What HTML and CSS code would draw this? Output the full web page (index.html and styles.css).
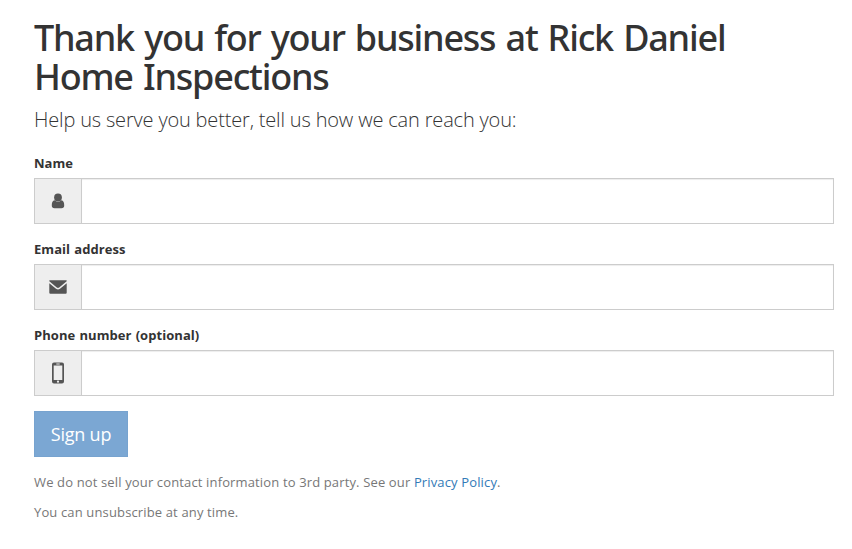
FILE: index.html
```html
<!DOCTYPE html>
<html lang="en">
<head>
    <meta charset="UTF-8">
    <meta name="viewport" content="width=device-width, initial-scale=1.0">
    <title>Rick Daniel Home Inspections</title>
    <link rel="stylesheet" href="styles.css">
</head>
<body>
    <div class="container">
        <h1>Thank you for your business at Rick Daniel Home Inspections</h1>
        <p class="lead">Help us serve you better, tell us how we can reach you:</p>

        <form>
            <div class="form-group">
                <label for="name">Name</label>
                <div class="input-group">
                    <span class="addon">
                        <svg width="14" height="16" viewBox="0 0 14 16"><circle cx="7" cy="4.500" r="3.900"/><path d="M3.800 7.200Q7 10.500 10.200 7.200C12.700 7.500 13.200 9.800 13.200 12.500Q13.200 15.300 10.500 15.300H3.500Q.8 15.300 .8 12.500C.8 9.800 1.300 7.500 3.800 7.200Z"/></svg>
                    </span>
                    <input type="text" id="name">
                </div>
            </div>

            <div class="form-group">
                <label for="email">Email address</label>
                <div class="input-group">
                    <span class="addon">
                        <svg width="18" height="14" viewBox="0 0 18 14"><path d="M.8 .3H17.200Q18 .4 17.700 1.300L10.200 7.600Q9 8.500 7.800 7.600L.3 1.300Q0 .4 .8 .3ZM.3 3.200L7 8.800Q9 10.200 11 8.800L17.700 3.200V12.700Q17.700 13.700 16.700 13.700H1.300Q.3 13.700 .3 12.700Z"/></svg>
                    </span>
                    <input type="email" id="email">
                </div>
            </div>

            <div class="form-group">
                <label for="phone">Phone number (optional)</label>
                <div class="input-group">
                    <span class="addon">
                        <svg width="14" height="22" viewBox="0 0 14 22"><path fill-rule="evenodd" d="M3 .5H11Q13 .5 13 2.500V19.500Q13 21.500 11 21.500H3Q1 21.500 1 19.500V2.500Q1 .5 3 .5ZM2.700 3.500V18H11.300V3.500ZM5.300 1.600V2.400H8.700V1.600ZM7 18.600A1.100 1.100 0 1 0 7 20.800A1.100 1.100 0 1 0 7 18.600Z"/></svg>
                    </span>
                    <input type="tel" id="phone">
                </div>
            </div>

            <button type="submit">Sign up</button>
        </form>

        <p class="note">We do not sell your contact information to 3rd party. See our <a href="#">Privacy Policy</a>.</p>
        <p class="note">You can unsubscribe at any time.</p>
    </div>
</body>
</html>
```
FILE: styles.css
```css
* {
    box-sizing: border-box;
}
body {
    margin: 0;
    font-family: "Open Sans", "Noto Sans", sans-serif;
    font-size: 14px;
    line-height: 20px;
    color: #333;
    background-color: #fff;
}
.container {
    width: 800px;
    margin: 0 0 0 34px;
    padding-top: 18px;
}
h1 {
    margin: 0 0 10px;
    font-family: "Noto Sans", sans-serif;
    font-size: 36px;
    font-weight: 500;
    line-height: 39px;
    letter-spacing: -1.22px;
    word-spacing: 2px;
}
.lead {
    margin: 0 0 19px;
    font-size: 20px;
    font-weight: 300;
    line-height: 28px;
    letter-spacing: -0.17px;
}
.form-group {
    margin-bottom: 15px;
}
label {
    display: block;
    margin-bottom: 5px;
    font-size: 13px;
    font-weight: 700;
    letter-spacing: 0.05px;
    word-spacing: 0.8px;
}
.input-group {
    display: flex;
    height: 46px;
}
.addon {
    display: flex;
    width: 47px;
    align-items: center;
    justify-content: center;
    border: 1px solid #ccc;
    border-right: 0;
    background-color: #eee;
}
.addon svg {
    fill: #555;
}
input {
    flex: 1;
    padding: 10px 16px;
    border: 1px solid #ccc;
    border-radius: 0;
    font-size: 18px;
    box-shadow: inset 0 1px 1px rgba(0, 0, 0, 0.075);
}
button {
    display: block;
    width: 94px;
    height: 46px;
    margin-bottom: 15px;
    padding: 0;
    border: 1px solid #77a3cf;
    background-color: #7ba7d3;
    color: #fff;
    font-family: inherit;
    font-size: 18px;
    letter-spacing: -0.2px;
    cursor: pointer;
}
.note {
    margin: 0 0 10px;
    font-size: 13px;
    color: #777;
    letter-spacing: 0.14px;
}
a {
    color: #337ab7;
    text-decoration: none;
}
```
